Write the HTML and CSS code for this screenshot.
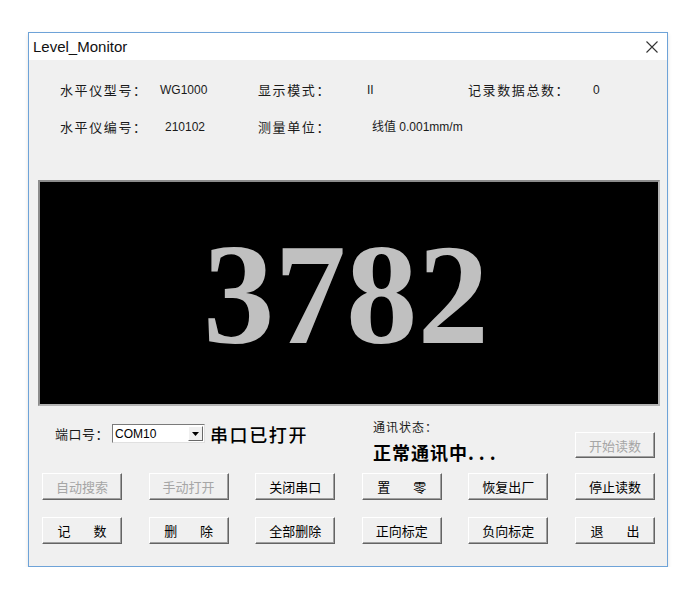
FILE: index.html
```html
<!DOCTYPE html>
<html lang="zh-CN">
<head>
    <meta charset="UTF-8">
    <title>Level_Monitor</title>
    <link rel="stylesheet" href="styles.css">
</head>
<body>
    <div class="window">
        <div class="titlebar">
            <span class="title">Level_Monitor</span>
            <svg class="close" width="12" height="12" viewBox="0 0 12 12">
                <path d="M0.5 0.5 L11.5 11.5 M11.5 0.5 L0.5 11.5" stroke="#333" stroke-width="1.1" fill="none"/>
            </svg>
        </div>

        <div class="client">
            <div class="info">
                <span class="label">水平仪型号：</span>
                <span class="value">WG1000</span>
                <span class="label">显示模式：</span>
                <span class="value">II</span>
                <span class="label">记录数据总数：</span>
                <span class="value">0</span>

                <span class="label">水平仪编号：</span>
                <span class="value shift">210102</span>
                <span class="label">测量单位：</span>
                <span class="value shift">线值 0.001mm/m</span>
                <span></span>
                <span></span>
            </div>

            <div class="display">
                <span class="reading" id="reading">3782</span>
            </div>

            <div class="controls">
                <div class="port">
                    <span class="port-label">端口号：</span>
                    <div class="combo">
                        <span class="combo-text">COM10</span>
                        <span class="combo-btn">
                            <svg width="7" height="4" viewBox="0 0 7 4"><path d="M0 0 H7 L3.5 4 Z" fill="#000"/></svg>
                        </span>
                    </div>
                    <span class="port-state">串口已打开</span>
                </div>
                <div class="status">
                    <div class="status-label">通讯状态：</div>
                    <div class="status-text">正常通讯中<span class="dots">...</span></div>
                </div>
                <button class="btn start" disabled>开始读数</button>
            </div>

            <div class="buttons">
                <button class="btn" disabled>自动搜索</button>
                <button class="btn" disabled>手动打开</button>
                <button class="btn">关闭串口</button>
                <button class="btn wide">置 零</button>
                <button class="btn">恢复出厂</button>
                <button class="btn">停止读数</button>
                <button class="btn wide">记 数</button>
                <button class="btn wide">删 除</button>
                <button class="btn">全部删除</button>
                <button class="btn">正向标定</button>
                <button class="btn">负向标定</button>
                <button class="btn wide">退 出</button>
            </div>
        </div>
    </div>
</body>
</html>
```

FILE: styles.css
```css
body {
    margin: 0;
    background: #ffffff;
    font-family: "Liberation Sans", "Noto Sans CJK SC", sans-serif;
    color: #000;
}
.window {
    margin: 32px 0 0 28px;
    width: 638px;
    border: 1px solid #6ea3d8;
    box-shadow: 0 2px 4px rgba(0, 0, 0, 0.12);
}
.titlebar {
    height: 27px;
    background: #ffffff;
    display: flex;
    align-items: center;
    justify-content: space-between;
    padding: 0 9px 0 4px;
}
.title {
    font-family: "Liberation Sans", sans-serif;
    font-size: 15px;
    color: #111;
}
.client {
    background: #f0f0f0;
    height: 506px;
    padding-top: 22px;
    box-sizing: border-box;
}
.info {
    display: grid;
    grid-template-columns: 100px 98px 109px 101px 125px 1fr;
    row-gap: 21px;
    padding-left: 31px;
    font-size: 12px;
    line-height: 16px;
    color: #1a1a1a;
}
.label {
    font-family: "Noto Sans CJK SC", sans-serif;
    font-size: 13px;
    letter-spacing: 1.6px;
}
.value {
    font-family: "Liberation Sans", "Noto Sans CJK SC", sans-serif;
}
.shift {
    padding-left: 5px;
}
.display {
    margin: 45px 0 0 9px;
    width: 622px;
    height: 226px;
    box-sizing: border-box;
    background: #000;
    border: 2px solid;
    border-color: #8c8c8c #b4b4b4 #b4b4b4 #8c8c8c;
    display: flex;
    align-items: center;
    justify-content: center;
}
.reading {
    font-family: "Liberation Serif", serif;
    font-weight: bold;
    font-size: 143px;
    line-height: 1;
    color: #c0c0c0;
    margin: 4px 6px 0 0;
}
.controls {
    height: 67px;
    display: flex;
    align-items: flex-start;
}
.port {
    width: 318px;
    padding-left: 26px;
    margin-top: 19px;
    display: flex;
    align-items: center;
    height: 17px;
}
.port-label {
    font-family: "Noto Sans CJK SC", sans-serif;
    font-size: 13px;
    letter-spacing: 0.5px;
    width: 57px;
    color: #1a1a1a;
}
.combo {
    width: 93px;
    height: 19px;
    box-sizing: border-box;
    background: #fff;
    border: 1px solid;
    border-color: #7a7a7a #e0e0e0 #e0e0e0 #7a7a7a;
    display: flex;
    align-items: center;
    justify-content: space-between;
}
.combo-text {
    font-size: 12px;
    padding-left: 2px;
}
.combo-btn {
    width: 15px;
    height: 15px;
    margin-right: 1px;
    box-sizing: border-box;
    background: #f0f0f0;
    border: 1px solid;
    border-color: #ffffff #696969 #696969 #ffffff;
    display: flex;
    align-items: center;
    justify-content: center;
}
.port-state {
    font-family: "Noto Sans CJK SC", sans-serif;
    font-size: 18px;
    font-weight: 500;
    letter-spacing: 1.6px;
    margin-left: 5px;
}
.status {
    width: 202px;
    margin-top: 14px;
}
.status-label {
    font-family: "Noto Sans CJK SC", sans-serif;
    font-size: 12px;
    line-height: 14px;
    letter-spacing: 1px;
    color: #1a1a1a;
}
.status-text {
    font-family: "Noto Sans CJK SC", sans-serif;
    font-size: 18px;
    font-weight: bold;
    line-height: 22px;
    margin-top: 7px;
    letter-spacing: 1px;
}
.dots {
    letter-spacing: 5px;
}
.btn {
    width: 80px;
    height: 27px;
    padding: 0;
    background: #f0f0f0;
    border: 1px solid;
    border-color: #ffffff #646464 #646464 #ffffff;
    box-shadow: inset -1px -1px 0 #a0a0a0;
    font-family: "Noto Sans CJK SC", sans-serif;
    font-size: 13px;
    color: #000;
}
.btn:disabled {
    color: #a6a6a6;
}
.btn.start {
    margin-top: 26px;
    height: 26px;
}
.btn.wide {
    word-spacing: 20px;
}
.buttons {
    display: grid;
    grid-template-columns: repeat(6, 80px);
    grid-auto-rows: 27px;
    column-gap: 26.6px;
    row-gap: 17px;
    padding-left: 13px;
}
```
